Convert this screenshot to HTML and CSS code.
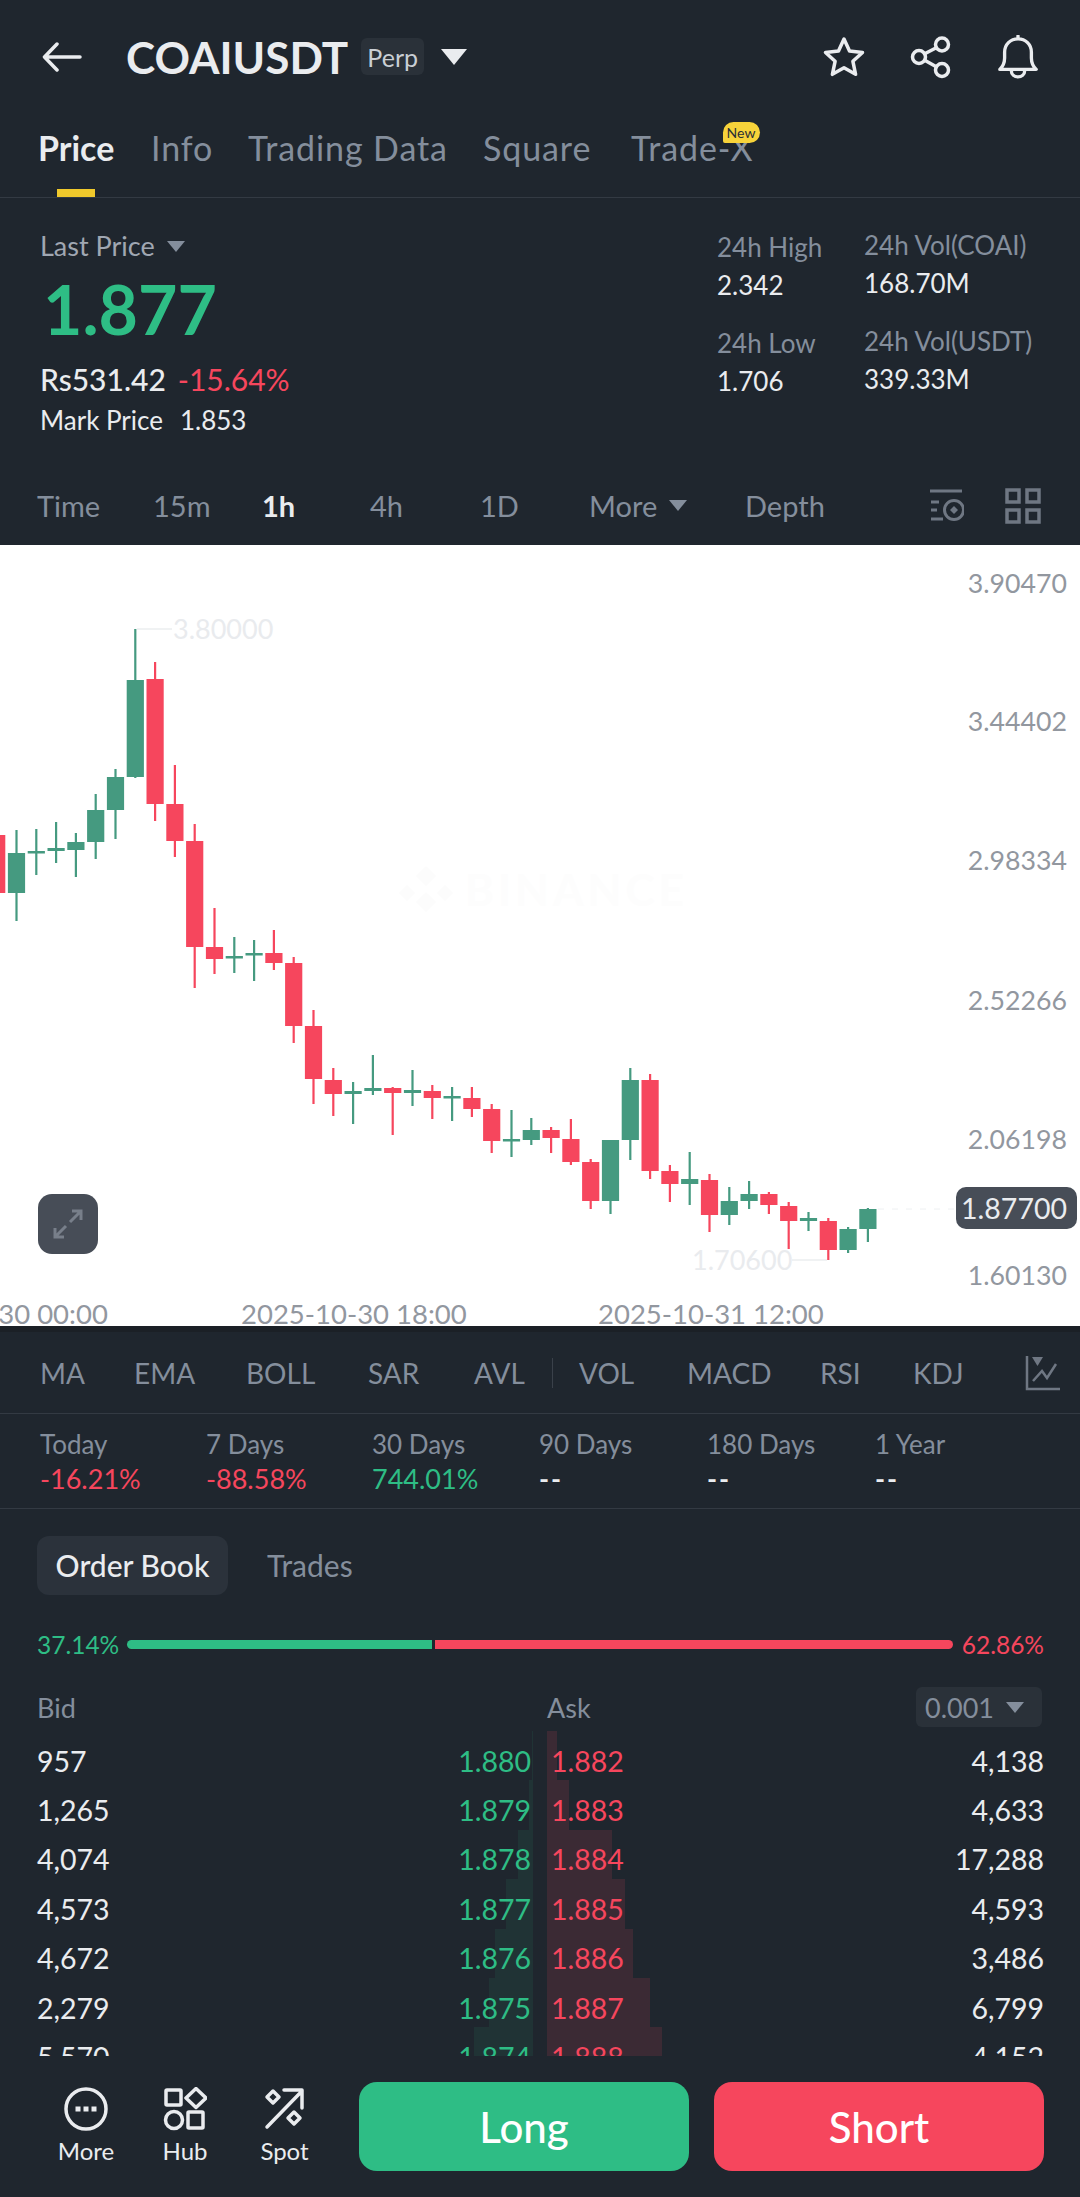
FILE: index.html
```html
<!DOCTYPE html>
<html lang="en">
<head>
<meta charset="utf-8">
<title>COAIUSDT Perp</title>
<link rel="stylesheet" href="styles.css">
</head>
<body>
<div class="page">
  <header class="nav">
    <svg class="ic-back" viewBox="0 0 40 30"><path d="M38 15H3M15 2 2.500 15 15 28"/></svg>
    <h1 class="title">COAIUSDT</h1>
    <span class="perp">Perp</span>
    <span class="caret-title"></span>
    <div class="nav-icons">
      <svg class="ic" viewBox="0 0 44 44"><path d="M22 4l5.500 12 13 1.500-9.600 8.800 2.700 13L22 32.800 10.400 39.300l2.700-13-9.600-8.800 13-1.500z"/></svg>
      <svg class="ic" viewBox="0 0 44 44"><circle cx="33" cy="9.500" r="6.500"/><circle cx="10" cy="22" r="6.500"/><circle cx="33" cy="35" r="6.500"/><path d="M15.700 18.800 27.300 12.700M15.700 25.200l11.600 6.600"/></svg>
      <svg class="ic" viewBox="0 0 44 46"><path d="M3 36c3-3 5-6 5-12v-6c0-8 6-14 14-14s14 6 14 14v6c0 6 2 9 5 12zM15 37c0 9 14 9 14 0M22 1v3"/></svg>
    </div>
  </header>

  <nav class="tabs">
    <a class="tab tab-on">Price</a>
    <a class="tab">Info</a>
    <a class="tab">Trading Data</a>
    <a class="tab">Square</a>
    <a class="tab tab-new">Trade-X<span class="new">New</span></a>
  </nav>

  <section class="stats">
    <div class="stats-main">
      <div class="last">Last Price<span class="caret-sm"></span></div>
      <div class="price">1.877</div>
      <div class="fiat">Rs531.42<span class="chg">-15.64%</span></div>
      <div class="mark">Mark Price<span class="mark-v">1.853</span></div>
    </div>
    <div class="stats-col col-a">
      <div class="s-k">24h High</div><div class="s-v">2.342</div>
      <div class="s-k s-gap">24h Low</div><div class="s-v">1.706</div>
    </div>
    <div class="stats-col col-b">
      <div class="s-k">24h Vol(COAI)</div><div class="s-v">168.70M</div>
      <div class="s-k s-gap">24h Vol(USDT)</div><div class="s-v">339.33M</div>
    </div>
  </section>

  <div class="intervals">
    <span class="iv">Time</span>
    <span class="iv">15m</span>
    <span class="iv iv-on">1h</span>
    <span class="iv">4h</span>
    <span class="iv">1D</span>
    <span class="iv">More<span class="caret-sm"></span></span>
    <span class="iv">Depth</span>
    <span class="iv-icons">
      <svg class="ic-set" viewBox="0 0 36 36"><path d="M2 3h32M3 14h8M3 22h6M3 31h12"/><circle cx="26" cy="22" r="9.500"/><path class="fill" d="M26 18l4 4-4 4-4-4z"/></svg>
      <svg class="ic-grid" viewBox="0 0 36 36"><rect x="2" y="2" width="12" height="12"/><rect x="22" y="2" width="12" height="12"/><rect x="2" y="22" width="12" height="12"/><rect x="22" y="22" width="12" height="12"/></svg>
    </span>
  </div>

  <section class="chart">
    <svg class="plot" viewBox="0 545 1080 781">
      <text class="wm" x="465" y="906">BINANCE</text>
      <path class="wm-logo" d="M426 866l10 10-10 10-10-10zM426 892l10 10-10 10-10-10zM407 885l8 8-8 8-8-8zM445 885l8 8-8 8-8-8z"/>
      <path class="wick up" d="M16.500 830V921M36.300 829V875M56.100 822V863M75.900 833V877M95.700 794V859M115.500 769V839M135.300 629V778M234.300 937V973M254.100 940V981M353.100 1082V1124M372.900 1055V1095M412.500 1070V1106M452.100 1087V1121M511.500 1110V1157M531.300 1118V1145M610.500 1140V1214M630.300 1068V1160M689.700 1152V1205M729.300 1187V1225M749.100 1181V1209M808.500 1212V1231M848.100 1227V1253M867.900 1208V1242"/>
      <path class="body up" d="M16.500 853V893M36.300 851V853.500M56.100 848V851M75.900 842V850M95.700 810V842M115.500 777V810M135.300 680V777M234.300 956V958.500M254.100 953V955.500M353.100 1091V1094M372.900 1088V1091M412.500 1090V1093M452.100 1096V1098.500M511.500 1139V1141.500M531.300 1130V1140M610.500 1140V1201M630.300 1080V1140M689.700 1179V1184M729.300 1201V1215M749.100 1194V1201M808.500 1218V1221M848.100 1229V1250M867.900 1209V1229"/>
      <path class="wick down" d="M155.100 662V821M174.900 765V857M194.700 824V988M214.500 908V974M273.900 930V970M293.700 957V1043M313.500 1010V1104M333.300 1068V1116M392.700 1087V1135M432.300 1085V1119M471.900 1087V1117M491.700 1104V1153M551.100 1127V1153M570.900 1119V1165M590.700 1159V1209M650.100 1074V1179M669.900 1165V1202M709.500 1174V1232M768.900 1192V1214M788.700 1202V1249M828.300 1218V1260"/>
      <path class="body down" d="M-3.300 835V893M155.100 679V804M174.900 804V841M194.700 841V947M214.500 947V959M273.900 953V963M293.700 963V1026M313.500 1026V1079M333.300 1080V1094M392.700 1088V1093M432.300 1091V1098M471.900 1098V1109M491.700 1109V1141M551.100 1130V1138M570.900 1139V1162M590.700 1162V1201M650.100 1080V1171M669.900 1171V1184M709.500 1180V1215M768.900 1194V1205M788.700 1206V1221M828.300 1221V1250"/>
      <path class="hair" d="M137 629H172M792 1260H827"/>
      <path class="last-line" d="M878 1209H956"/>
      <text class="peak" x="173" y="639">3.80000</text>
      <text class="peak" x="692" y="1270">1.70600</text>
      <text class="axis end" x="1067" y="593">3.90470</text>
      <text class="axis end" x="1067" y="731">3.44402</text>
      <text class="axis end" x="1067" y="870">2.98334</text>
      <text class="axis end" x="1067" y="1010">2.52266</text>
      <text class="axis end" x="1067" y="1149">2.06198</text>
      <text class="axis end" x="1067" y="1285">1.60130</text>
      <text class="axis-x" x="-12" y="1324">-30 00:00</text>
      <text class="axis-x" x="241" y="1324">2025-10-30 18:00</text>
      <text class="axis-x" x="598" y="1324">2025-10-31 12:00</text>
      <rect class="tag" x="956" y="1187" width="121" height="42" rx="10"/>
      <text class="tag-t end" x="1067" y="1219">1.87700</text>
    </svg>
    <button class="expand"><svg viewBox="0 0 34 34"><path d="M21 4h9v9M30 4 19 15M13 30H4v-9M4 30l11-11"/></svg></button>
  </section>

  <div class="indicators">
    <span class="ind">MA</span><span class="ind">EMA</span><span class="ind">BOLL</span><span class="ind">SAR</span><span class="ind">AVL</span>
    <span class="sep"></span>
    <span class="ind">VOL</span><span class="ind">MACD</span><span class="ind">RSI</span><span class="ind">KDJ</span>
    <svg class="ic-ind" viewBox="0 0 36 36"><path d="M2 1v33h33"/><path d="M8 26l9-10 5 7 9-14"/><path class="fill" d="M7 2h11l-5.500 9z"/></svg>
  </div>

  <div class="perf">
    <div class="p"><span class="p-k">Today</span><span class="p-v red">-16.21%</span></div>
    <div class="p"><span class="p-k">7 Days</span><span class="p-v red">-88.58%</span></div>
    <div class="p"><span class="p-k">30 Days</span><span class="p-v green">744.01%</span></div>
    <div class="p"><span class="p-k">90 Days</span><span class="p-v dash">--</span></div>
    <div class="p"><span class="p-k">180 Days</span><span class="p-v dash">--</span></div>
    <div class="p"><span class="p-k">1 Year</span><span class="p-v dash">--</span></div>
  </div>

  <section class="book">
    <div class="book-tabs">
      <span class="bt bt-on">Order Book</span>
      <span class="bt">Trades</span>
    </div>
    <div class="ratio">
      <span class="green">37.14%</span>
      <div class="ratio-bar"><i class="r-g"></i><i class="r-r"></i></div>
      <span class="red">62.86%</span>
    </div>
    <div class="book-head">
      <span class="bh-bid">Bid</span>
      <span class="bh-ask">Ask</span>
      <span class="step">0.001<span class="caret-sm"></span></span>
    </div>
    <div class="rows">
      <div class="row"><i class="d d-b" style="width:1.500px"></i><i class="d d-a" style="width:10px"></i><span class="q">957</span><span class="bp green">1.880</span><span class="ap red">1.882</span><span class="aq">4,138</span></div>
      <div class="row"><i class="d d-b" style="width:4px"></i><i class="d d-a" style="width:22px"></i><span class="q">1,265</span><span class="bp green">1.879</span><span class="ap red">1.883</span><span class="aq">4,633</span></div>
      <div class="row"><i class="d d-b" style="width:15px"></i><i class="d d-a" style="width:65px"></i><span class="q">4,074</span><span class="bp green">1.878</span><span class="ap red">1.884</span><span class="aq">17,288</span></div>
      <div class="row"><i class="d d-b" style="width:27px"></i><i class="d d-a" style="width:78px"></i><span class="q">4,573</span><span class="bp green">1.877</span><span class="ap red">1.885</span><span class="aq">4,593</span></div>
      <div class="row"><i class="d d-b" style="width:38px"></i><i class="d d-a" style="width:86px"></i><span class="q">4,672</span><span class="bp green">1.876</span><span class="ap red">1.886</span><span class="aq">3,486</span></div>
      <div class="row"><i class="d d-b" style="width:44px"></i><i class="d d-a" style="width:103px"></i><span class="q">2,279</span><span class="bp green">1.875</span><span class="ap red">1.887</span><span class="aq">6,799</span></div>
      <div class="row"><i class="d d-b" style="width:59px"></i><i class="d d-a" style="width:115px"></i><span class="q">5,570</span><span class="bp green">1.874</span><span class="ap red">1.888</span><span class="aq">4,152</span></div>
    </div>
  </section>

  <footer class="actions">
    <div class="act act-more">
      <svg viewBox="0 0 44 44"><circle cx="22" cy="22" r="20"/><path class="dots" d="M11.500 19.500h5v5h-5zM19.500 19.500h5v5h-5zM27.500 19.500h5v5h-5z"/></svg>
      <span>More</span>
    </div>
    <div class="act act-hub">
      <svg viewBox="0 0 44 44"><rect x="3" y="3" width="15" height="15" rx="1"/><path d="M33 1.500 43 11 33 20.500 23 11z"/><circle cx="11" cy="33" r="8.500"/><rect x="25" y="25" width="15" height="16" rx="1"/></svg>
      <span>Hub</span>
    </div>
    <div class="act act-spot">
      <svg viewBox="0 0 44 44"><path d="M4 40 39 4M21 3h18v18"/><path d="M10 4l6 6-6 6-6-6zM31 25l6 6-6 6-6-6z"/></svg>
      <span>Spot</span>
    </div>
    <button class="cta long">Long</button>
    <button class="cta short">Short</button>
  </footer>
</div>
</body>
</html>
```

FILE: styles.css
```css
* { box-sizing: border-box; }
html, body { margin: 0; padding: 0; }
body { background: #1f262e; font-family: "Lato", "Liberation Sans", sans-serif; color: #eaecef; }
.page { width: 1080px; height: 2197px; overflow: hidden; background: #1f262e; }
.green { color: #2ebd85; }
.red { color: #f6465d; }

/* header */
.nav { height: 113px; display: flex; align-items: center; padding-left: 42px; }
.ic-back { width: 40px; height: 30px; fill: none; stroke: #eaecef; stroke-width: 3.500; stroke-linecap: round; stroke-linejoin: round; }
.title { margin: 0 0 0 44px; font-size: 44px; font-weight: 700; color: #eaecef; }
.perp { margin-left: 13px; height: 37px; width: 63px; background: #2a3139; border-radius: 6px; font-size: 25px; color: #c9ced4; display: flex; align-items: center; justify-content: center; }
.caret-title { margin-left: 17px; width: 0; height: 0; border-left: 13px solid transparent; border-right: 13px solid transparent; border-top: 16px solid #eaecef; }
.nav-icons { margin-left: auto; margin-right: 40px; display: flex; gap: 43px; align-items: center; }
.ic { width: 44px; height: 44px; fill: none; stroke: #eaecef; stroke-width: 3.500; stroke-linejoin: round; stroke-linecap: round; }

/* tabs */
.tabs { height: 85px; border-bottom: 1px solid #333a43; display: grid; grid-template-columns: 113px 97px 235px 148px 1fr; padding-left: 38px; }
.tab { position: relative; font-size: 34px; letter-spacing: .9px; color: #848e9c; line-height: 40px; padding-top: 15px; justify-self: start; }
.tab-on { color: #eaecef; font-weight: 700; letter-spacing: 0; }
.tab-on::after { content: ""; position: absolute; left: 19px; width: 38px; height: 8px; top: 76px; background: #f0c92c; }
.new { position: absolute; right: -6px; top: 9px; width: 37px; height: 21px; background: #f7d33a; color: #2b2f36; border-radius: 11px 11px 11px 2px; font-size: 14px; letter-spacing: 0; line-height: 21px; text-align: center; }

/* stats */
.stats { height: 268px; display: flex; padding-left: 40px; position: relative; }
.stats-main { width: 677px; padding-top: 34px; }
.last { font-size: 27px; line-height: 28px; color: #a0a7b2; display: flex; align-items: center; }
.caret-sm { display: inline-block; width: 0; height: 0; margin-left: 12px; border-left: 9px solid transparent; border-right: 9px solid transparent; border-top: 11px solid #848e9c; }
.price { font-size: 68px; font-weight: 700; color: #2ebd85; line-height: 64px; margin-top: 17px; margin-left: 3px; }
.fiat { font-size: 30px; line-height: 32px; margin-top: 22px; font-weight: 500; color: #eaecef; }
.chg { color: #f6465d; margin-left: 12px; font-weight: 400; }
.mark { font-size: 26px; line-height: 30px; margin-top: 10px; color: #eaecef; }
.mark-v { margin-left: 17px; }
.col-a { width: 147px; padding-top: 35px; }
.col-b { padding-top: 33px; }
.s-k { font-size: 26px; line-height: 28px; color: #848e9c; }
.s-v { font-size: 26px; line-height: 28px; margin-top: 10px; color: #eaecef; }
.s-gap { margin-top: 30px; }

/* intervals */
.intervals { height: 79px; display: grid; grid-template-columns: 116px 109px 108px 110px 109px 156px 1fr 152px; align-items: center; font-size: 29px; color: #848e9c; padding-left: 37px; }
.iv { display: flex; align-items: center; }
.iv-on { color: #eaecef; font-weight: 700; }
.iv-icons { display: flex; gap: 41px; }
.ic-set { width: 36px; height: 36px; fill: none; stroke: #6f7783; stroke-width: 3; }
.ic-set .fill { fill: #6f7783; stroke: none; }
.ic-grid { width: 36px; height: 36px; fill: none; stroke: #6f7783; stroke-width: 3.500; }

/* chart */
.chart { height: 781px; background: #fff; position: relative; overflow: hidden; }
.plot { display: block; width: 1080px; height: 781px; }
.wick { fill: none; stroke-width: 2.200; }
.body { fill: none; stroke-width: 17.200; }
.up { stroke: #459a80; }
.down { stroke: #f6465d; }
.wm { font-size: 44px; font-weight: 700; fill: #fdfdfd; letter-spacing: 4px; }
.wm-logo { fill: #fcfcfc; }
.hair { stroke: #eceef0; stroke-width: 1.500; fill: none; }
.last-line { stroke: #eef0f2; stroke-width: 1; stroke-dasharray: 6 8; fill: none; }
.peak { font-size: 27px; fill: #e9ebee; }
.axis { font-size: 26.700px; fill: #92979f; }
.axis-x { font-size: 27.500px; fill: #92979f; }
.end { text-anchor: end; }
.tag { fill: #474d57; }
.tag-t { font-size: 28.500px; fill: #eaecef; }
.expand { position: absolute; left: 38px; top: 649px; width: 60px; height: 60px; border: 0; padding: 13px; border-radius: 14px; background: #474d57; }
.expand svg { display: block; width: 34px; height: 34px; fill: none; stroke: #787f8a; stroke-width: 3; }

/* indicators */
.indicators { height: 88px; border-top: 6px solid #1b2026; border-bottom: 1px solid #333a43; display: grid; grid-template-columns: 94px 112px 122px 106px 78px 27px 108px 133px 93px 112px 1fr; align-items: center; font-size: 28px; color: #848e9c; padding-left: 40px; }
.sep { width: 1px; height: 30px; background: #3a414a; }
.ic-ind { width: 36px; height: 36px; fill: none; stroke: #6f7783; stroke-width: 2.500; }
.ic-ind .fill { fill: #6f7783; stroke: none; }

/* perf */
.perf { height: 95px; border-bottom: 1px solid #333a43; display: grid; grid-template-columns: 166px 166px 167px 168px 168px 1fr; padding-left: 40px; padding-top: 15px; }
.p { display: flex; flex-direction: column; }
.p-k { font-size: 26px; line-height: 30px; color: #848e9c; }
.p-v { font-size: 27px; line-height: 30px; margin-top: 5px; color: #eaecef; }
.p-v.red { color: #f6465d; }
.p-v.green { color: #2ebd85; }
.p-v.dash { letter-spacing: 2px; font-weight: 700; }

/* order book */
.book { height: 548px; padding: 0; overflow: hidden; }
.book-tabs { display: flex; align-items: center; padding: 27px 0 0 37px; gap: 39px; }
.bt { font-size: 30px; color: #848e9c; line-height: 59px; }
.bt-on { background: #2b323b; border-radius: 12px; width: 191px; text-align: center; color: #eaecef; font-weight: 500; }
.ratio { display: flex; align-items: center; padding: 0 36px 0 37px; height: 30px; margin-top: 34px; font-size: 24.500px; }
.ratio-bar { flex: 1; display: flex; gap: 3px; margin: 0 9px 0 8px; }
.r-g { display: block; width: 305px; height: 9px; background: #2ebd85; border-radius: 5px 0 0 5px; }
.r-r { display: block; flex: 1; height: 9px; background: #f6465d; border-radius: 0 5px 5px 0; }
.book-head { height: 40px; margin-top: 28px; display: flex; align-items: center; font-size: 27px; color: #848e9c; padding-left: 37px; }
.bh-bid { flex: none; width: 510px; }
.step { margin-left: auto; margin-right: 38px; width: 126px; height: 40px; background: #2a3139; border-radius: 6px; display: flex; align-items: center; padding-left: 9px; }
.rows { margin-top: 4px; height: 325px; overflow: hidden; }
.row { position: relative; height: 49.400px; display: flex; align-items: center; font-size: 28.500px; padding: 10px 36px 0 37px; }
.row span { position: relative; }
.q { color: #eaecef; width: 200px; }
.bp { position: absolute !important; right: 549px; }
.ap { position: absolute !important; left: 551px; }
.aq { margin-left: auto; color: #eaecef; }
.d { position: absolute; top: 0; bottom: 0; display: block; }
.d-b { right: 547px; background: rgba(46, 189, 133, .09); }
.d-a { left: 547px; background: rgba(246, 70, 93, .13); }

/* actions */
.actions { height: 115px; display: flex; align-items: flex-start; padding-top: 25px; position: relative; }
.act { position: absolute; top: 30px; display: flex; flex-direction: column; align-items: center; font-size: 24px; color: #eaecef; }
.act svg { width: 44px; height: 44px; fill: none; stroke: #eaecef; stroke-width: 3.500; stroke-linejoin: round; stroke-linecap: round; margin-bottom: 6px; }
.act span { line-height: 28px; }
.act .dots { fill: #eaecef; stroke: none; }
.act-more { left: 59px; width: 54px; }
.act-hub { left: 163px; width: 44px; }
.act-spot { left: 260px; width: 49px; }
.cta { height: 89px; width: 330px; border: 0; border-radius: 18px; color: #fff; font-family: inherit; font-size: 42px; font-weight: 500; }
.long { margin-left: 359px; background: #2ebd85; }
.short { margin-left: 25px; background: #f6465d; }
```
